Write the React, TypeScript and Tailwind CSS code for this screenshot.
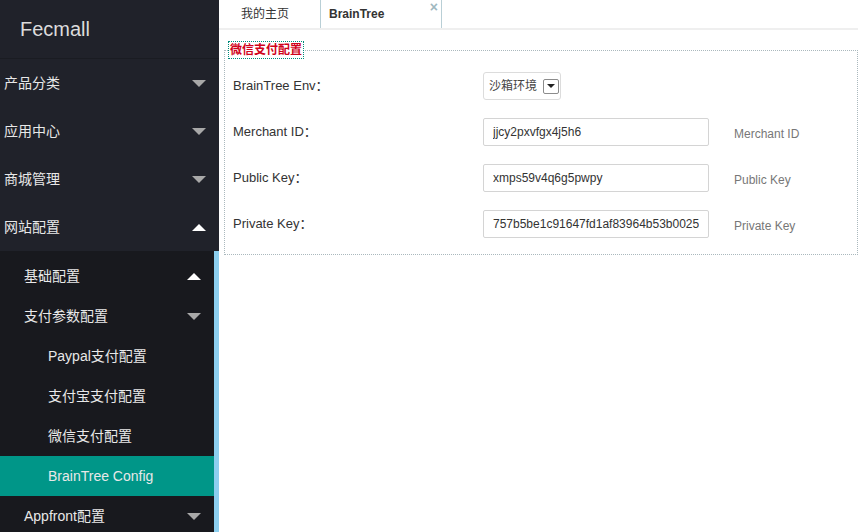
import { useState } from 'react';

const font = { fontFamily: '"Liberation Sans", "Noto Sans CJK SC", sans-serif' };

function Caret({ up, white }: { up?: boolean; white?: boolean }) {
  return (
    <span
      className={`h-0 w-0 border-x-[7px] border-x-transparent ${
        up ? 'border-b-[7px]' : 'border-t-[7px]'
      } ${white ? 'border-b-white border-t-white' : 'border-b-[#a8a8a8] border-t-[#a8a8a8]'}`}
    />
  );
}

const topMenu = ['产品分类', '应用中心', '商城管理'];

const fields = [
  { label: 'Merchant ID', value: 'jjcy2pxvfgx4j5h6', hint: 'Merchant ID' },
  { label: 'Public Key', value: 'xmps59v4q6g5pwpy', hint: 'Public Key' },
  { label: 'Private Key', value: '757b5be1c91647fd1af83964b53b0025', hint: 'Private Key' },
];

export default function App() {
  const [env, setEnv] = useState('sandbox');

  return (
    <div className="flex h-[532px] w-[858px] overflow-hidden bg-white" style={font}>
      {/* sidebar */}
      <div className="flex w-[219px] shrink-0 flex-col overflow-hidden bg-[#20222a] text-[14px] text-[#e8e8e8]">
        <div className="flex h-[58px] shrink-0 items-center pl-[20px] text-[20px] text-[#dcdcdc]">Fecmall</div>
        <div className="h-px shrink-0 bg-[#1a1c22]" />
        {topMenu.map((m) => (
          <div key={m} className="flex h-[48px] shrink-0 items-center justify-between pl-[4px] pr-[13px]">
            <span>{m}</span>
            <Caret />
          </div>
        ))}
        <div className="flex h-[48px] shrink-0 items-center justify-between pl-[4px] pr-[13px]">
          <span>网站配置</span>
          <Caret up white />
        </div>
        <div className="flex flex-1 overflow-hidden">
          <div className="flex-1 bg-[#18191e] pt-[5px]">
            <div className="flex h-[40px] items-center justify-between pl-[24px] pr-[13px]">
              <span>基础配置</span>
              <Caret up white />
            </div>
            <div className="flex h-[40px] items-center justify-between pl-[24px] pr-[13px]">
              <span>支付参数配置</span>
              <Caret />
            </div>
            <div className="flex h-[40px] items-center pl-[48px]">Paypal支付配置</div>
            <div className="flex h-[40px] items-center pl-[48px]">支付宝支付配置</div>
            <div className="flex h-[40px] items-center pl-[48px]">微信支付配置</div>
            <div className="flex h-[40px] items-center bg-[#009688] pl-[48px]">BrainTree Config</div>
            <div className="flex h-[40px] items-center justify-between pl-[24px] pr-[13px]">
              <span>Appfront配置</span>
              <Caret />
            </div>
          </div>
          <div className="w-[5px] bg-[#8ccfef]" />
        </div>
      </div>

      {/* main */}
      <div className="flex flex-1 flex-col">
        <div className="flex h-[30px] border-b-2 border-[#efefef] text-[12px] text-[#333]">
          <div className="flex w-[101px] items-center pl-[22px]">我的主页</div>
          <div className="relative flex w-[122px] items-center border-x border-[#b9cfd6] pl-[8px] font-bold">
            BrainTree
            <span className="absolute right-[3px] top-[-3px] text-[14px] font-bold text-[#9fb8c0]">×</span>
          </div>
        </div>

        <fieldset className="ml-[5px] mt-[11px] h-[214px] border border-dotted border-[#aab8bd] px-[8px] pt-[13px]">
          <legend className="ml-[-5px] border border-dotted border-[#00897b] px-[1px] text-[12px] font-bold leading-[16px] text-[#d0021b]">
            微信支付配置
          </legend>
          <div className="flex flex-col gap-[18px] text-[13px] text-[#333]">
            <div className="flex h-[28px] items-center">
              <span className="w-[250px]">BrainTree Env：</span>
              <div className="flex h-[28px] w-[78px] items-center whitespace-nowrap rounded-[3px] border border-[#dcdcdc] pl-[5px] text-[12px] text-[#444]">
                <span onClick={() => setEnv(env === 'sandbox' ? 'production' : 'sandbox')}>
                  {env === 'sandbox' ? '沙箱环境' : '生产环境'}
                </span>
                <span className="ml-[6px] flex h-[15px] w-[16px] items-center justify-center rounded-[2px] border border-[#8c8c8c] bg-white">
                  <span className="h-0 w-0 border-x-[4px] border-t-[4px] border-x-transparent border-t-[#222]" />
                </span>
              </div>
            </div>
            {fields.map((f) => (
              <div key={f.label} className="flex h-[28px] items-center">
                <span className="w-[250px]">{f.label}：</span>
                <input
                  className="h-[28px] w-[226px] rounded-[2px] border border-[#d4d4d4] px-[9px] text-[12px] text-[#333] outline-none"
                  defaultValue={f.value}
                  style={font}
                />
                <span className="ml-[25px] mt-[4px] text-[12px] text-[#777]">{f.hint}</span>
              </div>
            ))}
          </div>
        </fieldset>
      </div>
    </div>
  );
}
